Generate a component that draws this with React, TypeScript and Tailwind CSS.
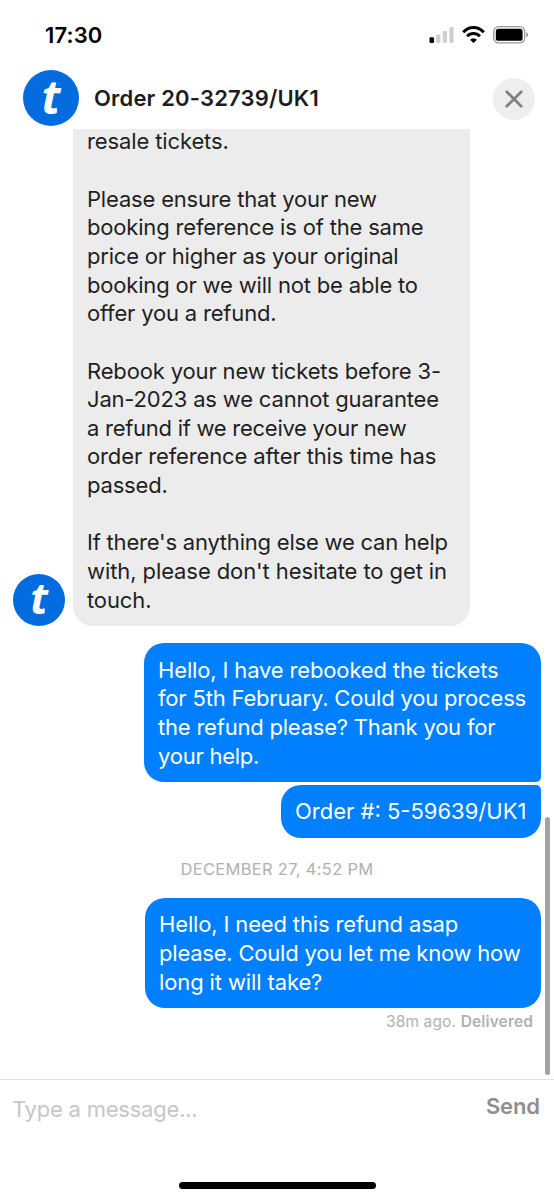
type BubbleLine = { text: string; spacing?: string };

const agentLines: BubbleLine[] = [
  { text: "resale tickets.", spacing: "tracking-[-0.12px]" },
  { text: "" },
  { text: "Please ensure that your new" },
  { text: "booking reference is of the same" },
  { text: "price or higher as your original", spacing: "tracking-[-0.21px]" },
  { text: "booking or we will not be able to" },
  { text: "offer you a refund." },
  { text: "" },
  { text: "Rebook your new tickets before 3-", spacing: "tracking-[-0.15px]" },
  { text: "Jan-2023 as we cannot guarantee" },
  { text: "a refund if we receive your new", spacing: "tracking-[-0.27px]" },
  { text: "order reference after this time has", spacing: "tracking-[-0.12px]" },
  { text: "passed." },
  { text: "" },
  { text: "If there's anything else we can help", spacing: "tracking-[-0.21px]" },
  { text: "with, please don't hesitate to get in", spacing: "tracking-[-0.09px]" },
  { text: "touch.", spacing: "tracking-[-0.12px]" },
];

const rebookedLines: BubbleLine[] = [
  { text: "Hello, I have rebooked the tickets", spacing: "tracking-[-0.15px]" },
  { text: "for 5th February. Could you process" },
  { text: "the refund please? Thank you for", spacing: "tracking-[-0.21px]" },
  { text: "your help.", spacing: "tracking-[-0.24px]" },
];

const orderLines: BubbleLine[] = [{ text: "Order #: 5-59639/UK1", spacing: "tracking-[0px]" }];

const followUpLines: BubbleLine[] = [
  { text: "Hello, I need this refund asap", spacing: "tracking-[-0.15px]" },
  { text: "please. Could you let me know how", spacing: "tracking-[-0.21px]" },
  { text: "long it will take?", spacing: "tracking-[-0.12px]" },
];

const Lines = ({ lines }: { lines: BubbleLine[] }) => (
  <>
    {lines.map(({ text, spacing }, index) => (
      <p
        key={index}
        className={`h-[28.65px] text-[22px] leading-[28.65px] whitespace-nowrap ${spacing ?? "tracking-[-0.18px]"}`}
      >
        {text}
      </p>
    ))}
  </>
);

const StatusBar = () => (
  <div className="flex h-[70px] shrink-0 items-start justify-between pt-[21px] pr-[25px] pl-[45px]">
    <span className="text-[22px] leading-[29px] font-semibold tracking-[0.15px] text-black">17:30</span>
    <div className="flex items-center gap-[7px] pt-[5px]">
      <svg width="26" height="18" viewBox="0 0 26 18">
        <rect x="0.5" y="11.2" width="4.5" height="5.8" rx="1.3" fill="#000" />
        <rect x="7.2" y="8.5" width="4.2" height="8.5" rx="1.3" fill="#cfcfcf" />
        <rect x="13.8" y="5" width="4.2" height="12" rx="1.3" fill="#cfcfcf" />
        <rect x="20.4" y="1" width="4.2" height="16" rx="1.3" fill="#cfcfcf" />
      </svg>
      <svg width="23" height="18" viewBox="0 0 23 18" fill="none" stroke="#000" strokeWidth="3">
        <path d="M1.2 6.3 C7 -0.1 16 -0.1 21.8 6.3" />
        <path d="M5.1 10.3 C8.8 6.5 14.2 6.5 17.9 10.3" />
        <path d="M8 13.8 Q11.5 10.8 15 13.8 L11.5 17.1 Z" fill="#000" stroke="none" />
      </svg>
      <svg width="37" height="18" viewBox="-1 0 37 18">
        <rect x="0.7" y="0.7" width="31" height="16.2" rx="5" fill="none" stroke="#999" strokeWidth="1.3" />
        <rect x="2.8" y="2.8" width="26.8" height="12" rx="2.6" fill="#000" />
        <path d="M33.3 6 Q35.2 7 35.2 8.8 Q35.2 10.6 33.3 11.6 Z" fill="#999" />
      </svg>
    </div>
  </div>
);

const Header = () => (
  <div className="flex h-[59px] shrink-0 items-start pr-[19px] pl-[23px]">
    <div className="flex size-[56px] items-center justify-center rounded-full bg-[#026cdf]">
      <span className="pb-[4px] font-['Open_Sans',sans-serif] text-[46px] leading-[48px] font-bold text-white italic">t</span>
    </div>
    <h1 className="ml-[15px] flex-1 pt-[14px] text-[22px] leading-[28px] font-semibold tracking-[0.17px] text-[#1c1c1e]">
      Order 20-32739/UK1
    </h1>
    <button className="mt-[8px] flex size-[42px] items-center justify-center rounded-full bg-[#eeeeef]">
      <svg width="18" height="18" viewBox="0 0 18 18" fill="none" stroke="#7f7f84" strokeWidth="2.7" strokeLinecap="round">
        <path d="M1.7 1.7 L16.3 16.3 M16.3 1.7 L1.7 16.3" />
      </svg>
    </button>
  </div>
);

const App = () => {
  return (
    <div className="flex h-[1200px] w-[554px] flex-col overflow-hidden bg-white font-['Inter',sans-serif]">
      <StatusBar />
      <Header />

      <main className="relative flex h-[950px] shrink-0 flex-col">
        <div className="flex h-[497px] shrink-0 items-end pl-[13px]">
          <div className="flex size-[52px] items-center justify-center rounded-full bg-[#026cdf]">
            <span className="pb-[4px] font-['Open_Sans',sans-serif] text-[43px] leading-[44px] font-bold text-white italic">t</span>
          </div>
          <div className="ml-[8px] h-[497px] w-[397px] rounded-b-[20px] bg-[#ececec] pl-[14px] text-[#1f1f1f]">
            <div className="-mt-[1.6px]">
              <Lines lines={agentLines} />
            </div>
          </div>
        </div>

        <div className="mt-[17px] flex flex-col items-end gap-[3px] pr-[13px] text-white">
          <div className="h-[139px] w-[397px] rounded-[20px] rounded-br-[5px] bg-[#007fff] pt-[12.6px] pl-[14px]">
            <Lines lines={rebookedLines} />
          </div>
          <div className="h-[53px] w-[260px] rounded-[20px] rounded-tr-[5px] bg-[#007fff] pt-[12px] pl-[14px]">
            <Lines lines={orderLines} />
          </div>
        </div>

        <p className="mt-[20px] text-center text-[16.5px] leading-[22px] tracking-[0.3px] text-[#b1b1b3]">
          DECEMBER 27, 4:52 PM
        </p>

        <div className="mt-[18px] flex flex-col items-end pr-[13px] text-white">
          <div className="h-[110px] w-[396px] rounded-[20px] bg-[#007fff] pt-[12.4px] pl-[14px]">
            <Lines lines={followUpLines} />
          </div>
        </div>
        <p className="mt-[3px] pr-[21px] text-right text-[15.5px] leading-[22px] tracking-[0.14px] text-[#b1b1b3]">
          38m ago. <span className="font-semibold">Delivered</span>
        </p>

        {/* scroll indicator */}
        <div className="absolute top-[688px] right-[4px] h-[258px] w-[5px] rounded-full bg-[#a3a3a3]" />
      </main>

      <footer className="flex flex-1 flex-col border-t border-[#e2e2e2]">
        <div className="flex h-[64px] items-start justify-between pr-[14px] pl-[12px]">
          <span className="pt-[15px] text-[22px] leading-[28px] tracking-[-0.22px] text-[#c6c6c8]">Type a message...</span>
          <span className="pt-[12px] text-[22px] leading-[28px] font-semibold tracking-[-0.1px] text-[#8f8f91]">Send</span>
        </div>
        <div className="mt-[38px] ml-[179px] h-[7px] w-[197px] rounded-full bg-black" />
      </footer>
    </div>
  );
};

export default App;
